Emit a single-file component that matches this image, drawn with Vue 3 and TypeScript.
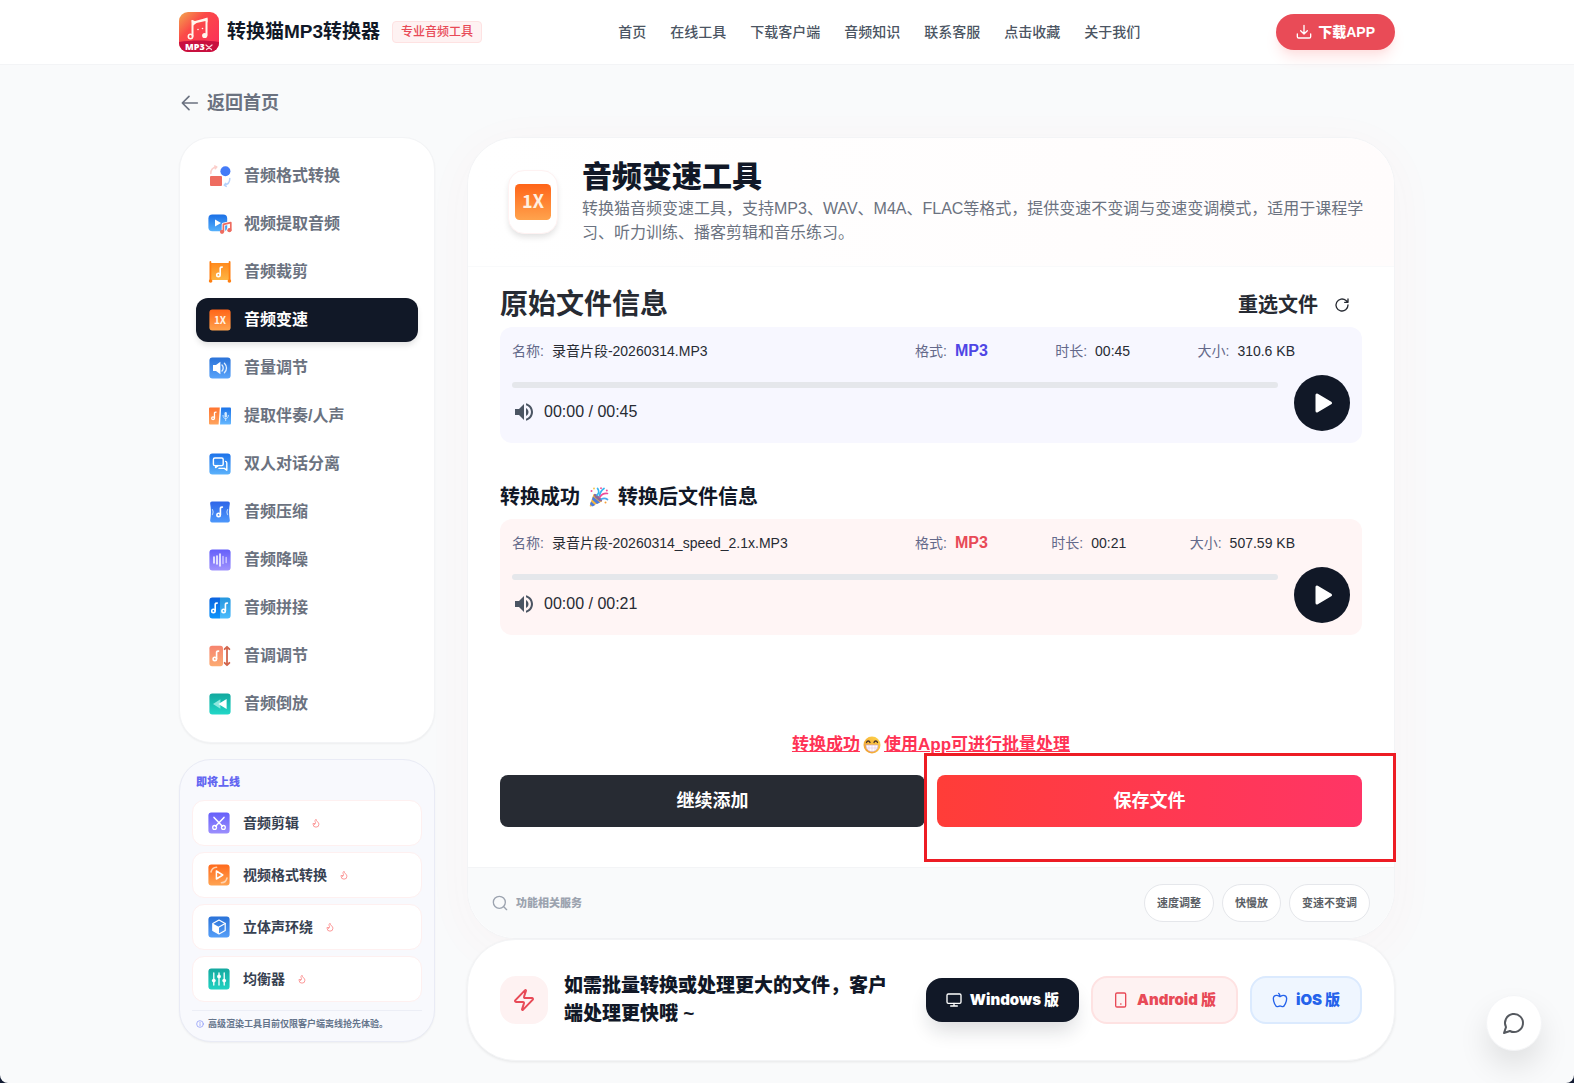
<script setup lang="ts">
import { ref } from 'vue'

interface Tool {
  label: string
  icon: string
  active?: boolean
}

interface AudioFile {
  id: string
  name: string
  format: string
  duration: string
  size: string
}

const navLinks: string[] = ['首页', '在线工具', '下载客户端', '音频知识', '联系客服', '点击收藏', '关于我们']

// Eighth note shared by several tool icons
const note = (x: number, y: number, s = 1): string =>
  `<g transform="translate(${x} ${y}) scale(${s})" fill="none" stroke="#fff" stroke-width="1.6" stroke-linecap="round" stroke-linejoin="round"><circle cx="-1.2" cy="2.9" r="1.7"/><path d="M.6 2.8V-4c.2-.7 1-.9 2-.9"/></g>`

const gradient = (id: string, from: string, to: string): string =>
  `<defs><linearGradient id="${id}" x1="0" y1="0" x2="0" y2="1"><stop stop-color="${from}"/><stop offset="1" stop-color="${to}"/></linearGradient></defs>`

const tile = (id: string, from: string, to: string): string =>
  `${gradient(id, from, to)}<rect x="1.4" y="1.4" width="21.2" height="21.2" rx="3" fill="url(#${id})"/>`

const speedIcon =
  tile('g-speed', '#ff6418', '#ffa34d') +
  '<text x="12" y="15.8" font-family="Noto Sans CJK SC, sans-serif" font-size="10" font-weight="700" text-anchor="middle" fill="#fff4e6">1X</text>'

const tools: Tool[] = [
  {
    label: '音频格式转换',
    icon:
      '<rect x="2" y="12" width="12" height="10" rx="1" fill="#ee6c60"/><circle cx="17.4" cy="7.2" r="5" fill="#447bf7"/><path d="M2.8 9.4C2.8 5.4 4.8 3.4 8.4 3M6.6 2l2.2 1-1.6 1.8" fill="none" stroke="#fbcfcb" stroke-width="1.5"/><path d="M21.8 14.6c0 4-1.8 6-5.4 6.4M18.2 22.4l-2-1.2 1.4-1.8" fill="none" stroke="#b5d2fb" stroke-width="1.5"/>'
  },
  {
    label: '视频提取音频',
    icon:
      gradient('g-video', '#1a6fe6', '#55b0fb') +
      '<rect x=".4" y="2.4" width="18.8" height="16.8" rx="4" fill="url(#g-video)"/><path d="M7 7.4v7.2l6-3.6z" fill="#fff"/><path d="M15.4 19.6v-7.2l7.4-1.8v7.4" fill="none" stroke="#fff" stroke-width="3.4"/><path d="M15.4 19.6v-7.2l7.4-1.8v7.4" fill="none" stroke="#ee6c60" stroke-width="1.7"/><circle cx="14" cy="19.8" r="2.1" fill="#ee6c60"/><circle cx="21.4" cy="18.2" r="2.1" fill="#ee6c60"/>'
  },
  {
    label: '音频裁剪',
    icon:
      gradient('g-trim', '#ff8a1c', '#fdb544') +
      '<rect x="2.4" y="3" width="19.2" height="17" fill="url(#g-trim)"/><path d="M2.4 2v19M21.6 2v19" stroke="#ff7f11" stroke-width="1.8" stroke-linecap="round"/><circle cx="2.6" cy="21" r="1.8" fill="#ff7f11"/><circle cx="21.4" cy="21" r="1.8" fill="#ff7f11"/>' +
      note(11.6, 12)
  },
  { label: '音频变速', icon: speedIcon, active: true },
  {
    label: '音量调节',
    icon:
      tile('g-volume', '#2a72d8', '#5aa4fa') +
      '<path d="M5 9h3l4.4-3.2v12.4L8 15H5z" fill="#fff"/><path d="M14 9c1.6 1.6 1.6 4.4 0 6M16.4 7.2c2.8 2.8 2.8 6.8 0 9.6" fill="none" stroke="#e2efff" stroke-width="1.3" stroke-linecap="round"/>'
  },
  {
    label: '提取伴奏/人声',
    icon:
      gradient('g-split-a', '#ff7430', '#ffa45e') +
      gradient('g-split-b', '#1a72e8', '#66b8ff') +
      '<path d="M2 3.4h9.8L10.6 20.6H2a1 1 0 0 1-1-1V4.4a1 1 0 0 1 1-1z" fill="url(#g-split-a)"/><path d="M13.2 3.4H22a1 1 0 0 1 1 1v15.2a1 1 0 0 1-1 1H12z" fill="url(#g-split-b)"/>' +
      note(6, 12, 0.8) +
      '<rect x="16.5" y="8" width="2.4" height="5.4" rx="1.2" fill="#d5eaff"/><path d="M15 11.4c0 4.4 5.4 4.4 5.4 0M17.7 14.6v2" fill="none" stroke="#d5eaff" stroke-width=".9"/>'
  },
  {
    label: '双人对话分离',
    icon:
      tile('g-dialog', '#1c72ea', '#5cb2fb') +
      '<rect x="5.4" y="6" width="9.8" height="7.6" rx="1.4" fill="none" stroke="#fff" stroke-width="1.4"/><path d="M7.6 13.6v2l2.4-2M17.6 9.4c1 .2 1.2.8 1.2 1.6v7.2l-2.4-1.8H11" fill="none" stroke="#fff" stroke-width="1.4" stroke-linejoin="round"/>'
  },
  {
    label: '音频压缩',
    icon:
      gradient('g-compress', '#2f66e8', '#4c97fb') +
      '<path d="M4 1.6h16c1.4 0 2 1.2 1.8 2.4-1 5.4-1 10.600 0 16 .2 1.2-.4 2.4-1.8 2.400H4c-1.400 0-2-1.200-1.800-2.400 1-5.400 1-10.600 0-16C2 2.800 2.600 1.600 4 1.600z" fill="url(#g-compress)"/><path d="M4.400 9.600c1 1.600 1 3.400 0 5M19.600 9.600c-1 1.600-1 3.400 0 5" fill="none" stroke="#a9cdfd" stroke-width="1.200"/>' +
      note(11.8, 12)
  },
  {
    label: '音频降噪',
    icon:
      tile('g-noise', '#6560fa', '#9f92fd') +
      '<path d="M6 9v6M9 8v8M12 6v12" stroke="#fff" stroke-width="1.5" stroke-linecap="round"/><path d="M15 8.4v7.2M18.2 9.4v5.2" stroke="#c9c4ff" stroke-width="1.5" stroke-linecap="round"/>'
  },
  {
    label: '音频拼接',
    icon:
      gradient('g-join-a', '#0c62df', '#0b95fb') +
      gradient('g-join-b', '#2596de', '#4cbcfc') +
      '<path d="M12 1.4H4.4a3 3 0 0 0-3 3v15.2a3 3 0 0 0 3 3H12z" fill="url(#g-join-a)"/><path d="M12 1.4h7.6a3 3 0 0 1 3 3v15.2a3 3 0 0 1-3 3H12z" fill="url(#g-join-b)"/>' +
      note(6.6, 12) +
      note(16.8, 12)
  },
  {
    label: '音调调节',
    icon:
      gradient('g-pitch', '#f6846f', '#fcab72') +
      '<rect x="1.4" y="1.8" width="13.6" height="20.4" rx="2.6" fill="url(#g-pitch)"/><path d="M19 4v16M16.6 5.2 19 2.8l2.4 2.4M16.6 18.8 19 21.2l2.4-2.4" fill="none" stroke="#d0654d" stroke-width="1.8"/>' +
      note(8, 12)
  },
  {
    label: '音频倒放',
    icon:
      tile('g-reverse', '#12a89e', '#22d8c8') +
      '<path d="M12.4 7.2v9.6L5 12z" fill="#8fe8df"/><path d="M18.6 7v10L10.4 12z" fill="#fff"/>'
  }
]

const upcoming: Tool[] = [
  {
    label: '音频剪辑',
    icon:
      tile('g-edit', '#655ffa', '#9c8ffd') +
      '<path d="M7 6.4l8.4 8.8M17 6.4l-8.4 8.8" stroke="#fff" stroke-width="1.5" stroke-linecap="round"/><circle cx="7.6" cy="16.4" r="1.9" fill="none" stroke="#fff" stroke-width="1.3"/><circle cx="16.4" cy="16.4" r="1.9" fill="none" stroke="#fff" stroke-width="1.3"/>'
  },
  {
    label: '视频格式转换',
    icon:
      tile('g-vconv', '#ff6a1c', '#ffa452') +
      '<path d="M9.4 8v8l6.4-4z" fill="none" stroke="#fff" stroke-width="1.5" stroke-linejoin="round"/><path d="M4 9c.6-3 2.6-4.6 5.6-4.800M20 15c-.6 3-2.600 4.600-5.600 4.800" fill="none" stroke="#ffd3b0" stroke-width="1.5"/>'
  },
  {
    label: '立体声环绕',
    icon:
      tile('g-stereo', '#2a72d8', '#569ff8') +
      '<path d="M12 5l6.2 3.5v7L12 19l-6.2-3.500v-7z" fill="none" stroke="#fff" stroke-width="1.2" stroke-linejoin="round"/><path d="M5.8 8.500L12 12v7l-6.200-3.500z" fill="#fff"/><path d="M12 12l6.200-3.500" stroke="#fff" stroke-width="1.2"/>'
  },
  {
    label: '均衡器',
    icon:
      tile('g-eq', '#14a89f', '#22d3c2') +
      '<path d="M6.8 6v12M12 6v12M17.2 6v12" stroke="#fff" stroke-width="1.3" stroke-linecap="round"/><circle cx="6.8" cy="13.6" r="1.9" fill="#fff"/><circle cx="12" cy="9.4" r="1.9" fill="#fff"/><circle cx="17.2" cy="13.6" r="1.9" fill="#fff"/>'
  }
]

const original: AudioFile = {
  id: 'original',
  name: '录音片段-20260314.MP3',
  format: 'MP3',
  duration: '00:45',
  size: '310.6 KB'
}

const converted: AudioFile = {
  id: 'converted',
  name: '录音片段-20260314_speed_2.1x.MP3',
  format: 'MP3',
  duration: '00:21',
  size: '507.59 KB'
}

const sections = [original, converted]
const position = ref<Record<string, number>>({ original: 0, converted: 0 })
const tags: string[] = ['速度调整', '快慢放', '变速不变调']
</script>

<template>
  <div class="page">
    <header class="topbar">
      <div class="container topbar-row">
        <div class="brand">
          <svg class="logo" viewBox="0 0 40 40" aria-hidden="true">
            <defs>
              <linearGradient id="logo-bg" x1="0" y1="0" x2="1" y2="1">
                <stop stop-color="#f2a84e" />
                <stop offset=".35" stop-color="#fb4a48" />
                <stop offset="1" stop-color="#fb2a5c" />
              </linearGradient>
              <clipPath id="logo-clip"><rect width="40" height="40" rx="9" /></clipPath>
            </defs>
            <g clip-path="url(#logo-clip)">
              <rect width="40" height="40" fill="url(#logo-bg)" />
              <path d="M0 30c12-2 28-2 40 0v10H0z" fill="#c8103f" />
              <path d="M13.500 24V9M27.500 7v16" fill="none" stroke="#fff6ee" stroke-width="2" />
              <path d="M12.500 8l3.500 1 7.500-2 5-1.500v5l-2-1.500-9 2-4 3z" fill="#fff6ee" />
              <circle cx="11.500" cy="24.500" r="2.200" fill="none" stroke="#fff6ee" stroke-width="1.500" />
              <circle cx="25.700" cy="23.500" r="2.600" fill="#fff6ee" />
              <circle cx="19" cy="17.500" r=".8" fill="#fff6ee" />
              <circle cx="23.500" cy="16.500" r=".8" fill="#fff6ee" />
              <text x="6" y="37.500" font-family="Open Sans, sans-serif" font-size="9" font-weight="800" fill="#fff">MP3</text>
              <path d="M27 33l5.500 4.500M33 33l-5.500 4.500" stroke="#fbd3dc" stroke-width="1.200" />
            </g>
          </svg>
          <span class="brand-name">转换猫MP3转换器</span>
          <span class="brand-badge">专业音频工具</span>
        </div>
        <nav class="nav" aria-label="主导航">
          <a v-for="link in navLinks" :key="link" href="#">{{ link }}</a>
        </nav>
        <button class="download" type="button">
          <svg class="i16" viewBox="0 0 24 24" aria-hidden="true">
            <path d="M12 2v13M7 10l5 5 5-5M2 15v4a2 2 0 0 0 2 2h16a2 2 0 0 0 2-2v-4" />
          </svg>
          下载APP
        </button>
      </div>
    </header>

    <main class="container content">
      <a class="back" href="#">
        <svg viewBox="0 0 24 24" aria-hidden="true"><path d="M22 12H4M12 4l-8 8 8 8" /></svg>
        返回首页
      </a>

      <div class="columns">
        <aside class="side">
          <nav class="tools" aria-label="工具">
            <a v-for="tool in tools" :key="tool.label" href="#" class="tool" :class="{ active: tool.active }">
              <svg class="tool-icon" viewBox="0 0 24 24" aria-hidden="true" v-html="tool.icon"></svg>
              {{ tool.label }}
            </a>
          </nav>

          <section class="upcoming">
            <h2>即将上线</h2>
            <div class="upcoming-list">
              <a v-for="tool in upcoming" :key="tool.label" href="#" class="upcoming-item">
                <svg class="tool-icon" viewBox="0 0 24 24" aria-hidden="true" v-html="tool.icon"></svg>
                <span>{{ tool.label }}</span>
                <svg class="flame" viewBox="0 0 24 24" aria-hidden="true">
                  <path d="M8.500 14.500A2.500 2.500 0 0 0 11 12c0-1.400-.5-2-1-3-1.100-2.100-.2-4 2-6 .5 2.500 2 4.900 4 6.500s3 3.500 3 5.500a7 7 0 1 1-14 0c0-1.200.4-2.300 1-3a2.500 2.500 0 0 0 2.500 2.500z" />
                </svg>
              </a>
            </div>
            <p class="upcoming-note">
              <svg viewBox="0 0 24 24" aria-hidden="true"><circle cx="12" cy="12" r="10" /><path d="M12 11v6M12 7v1" /></svg>
              高级渲染工具目前仅限客户端离线抢先体验。
            </p>
          </section>
        </aside>

        <div class="main">
          <article class="panel">
            <header class="panel-head">
              <div class="panel-icon">
                <svg viewBox="0 0 24 24" aria-hidden="true">
                  <defs>
                    <linearGradient id="head-bg" x1="0" y1="0" x2="0" y2="1">
                      <stop stop-color="#ff6418" />
                      <stop offset="1" stop-color="#ffa34d" />
                    </linearGradient>
                  </defs>
                  <rect width="24" height="24" rx="3" fill="url(#head-bg)" />
                  <text x="12" y="16.200" font-family="Noto Sans CJK SC, sans-serif" font-size="12" font-weight="700" text-anchor="middle" fill="#fff0e0">1X</text>
                </svg>
              </div>
              <div>
                <h1>音频变速工具</h1>
                <p>转换猫音频变速工具，支持MP3、WAV、M4A、FLAC等格式，提供变速不变调与变速变调模式，适用于课程学习、听力训练、播客剪辑和音乐练习。</p>
              </div>
            </header>

            <div class="panel-body">
              <section v-for="file in sections" :key="file.id" class="file" :class="file.id">
                <div v-if="file.id === 'original'" class="file-head">
                  <h2>原始文件信息</h2>
                  <button class="reselect" type="button">
                    重选文件
                    <svg class="i16" viewBox="0 0 24 24" aria-hidden="true">
                      <path d="M21 12a9 9 0 1 1-3-6.700L21 8M21 3v5h-5" />
                    </svg>
                  </button>
                </div>
                <h3 v-else class="done-title">
                  转换成功
                  <svg viewBox="0 0 20 20" aria-hidden="true">
                    <path d="M4.500 7l8.500 7.500-11 5c-.8.300-1.400-.3-1.200-1z" fill="#f5b93c" />
                    <path d="M4 9.500l7 6-3 1.500-5-4.600zM2 14.500l4.200 3.600-2.600 1.300L1 17.200z" fill="#4b7be0" />
                    <ellipse cx="9" cy="10.700" rx="5.300" ry="1.700" transform="rotate(42 9 10.700)" fill="#8d6a9a" />
                    <path d="M8 8c2-1.500 2-4.500.6-6.500M10.500 9c.5-3 2-6 4.500-7.500" fill="none" stroke="#38b6ef" stroke-width="1.800" stroke-linecap="round" />
                    <path d="M11 10c1.500-2.500 4-4 7.500-3.500" fill="none" stroke="#f04c98" stroke-width="1.700" stroke-linecap="round" />
                    <path d="M12.500 12c2-1 4-1 6 .5" fill="none" stroke="#4aa8ee" stroke-width="1.700" stroke-linecap="round" />
                    <circle cx="2.500" cy="4" r="1" fill="#f04c98" /><circle cx="5" cy="1.500" r=".9" fill="#f6c544" />
                    <circle cx="17.800" cy="3.600" r="1" fill="#f04c98" /><circle cx="16.500" cy="15.500" r="1" fill="#f6a13c" />
                    <circle cx="12" cy="1.200" r=".9" fill="#f04c98" />
                  </svg>
                  转换后文件信息
                </h3>

                <div class="player">
                  <dl class="info">
                    <div class="pair"><dt>名称:</dt><dd>{{ file.name }}</dd></div>
                    <div class="meta">
                      <div class="pair"><dt>格式:</dt><dd class="format">{{ file.format }}</dd></div>
                      <div class="pair"><dt>时长:</dt><dd>{{ file.duration }}</dd></div>
                      <div class="pair"><dt>大小:</dt><dd>{{ file.size }}</dd></div>
                    </div>
                  </dl>
                  <div class="controls">
                    <div class="track">
                      <input v-model.number="position[file.id]" type="range" min="0" max="100" aria-label="播放进度" />
                      <div class="time">
                        <button class="mute" type="button" aria-label="音量">
                          <svg viewBox="0 0 24 24" aria-hidden="true">
                            <path d="M3 9v6h4l5 5V4L7 9H3zm13.500 3c0-1.770-1.020-3.290-2.500-4.030v8.050c1.480-.73 2.500-2.250 2.500-4.020zM14 3.230v2.060c2.890.86 5 3.540 5 6.710s-2.110 5.850-5 6.710v2.060c4.010-.91 7-4.490 7-8.770s-2.990-7.860-7-8.770z" />
                          </svg>
                        </button>
                        <span>00:00 / {{ file.duration }}</span>
                      </div>
                    </div>
                    <button class="play" type="button" aria-label="播放">
                      <svg viewBox="0 0 24 24" aria-hidden="true">
                        <path d="M6 4v16l13.500-8z" fill="#fff" stroke="#fff" stroke-width="3" stroke-linejoin="round" />
                      </svg>
                    </button>
                  </div>
                </div>
              </section>

              <a class="batch" href="#">
                <span>转换成功</span>
                <svg viewBox="0 0 18 18" aria-hidden="true">
                  <defs>
                    <linearGradient id="grin" x1="1" y1="0" x2="0" y2="1">
                      <stop stop-color="#ffd84e" />
                      <stop offset="1" stop-color="#f09a2c" />
                    </linearGradient>
                  </defs>
                  <circle cx="9" cy="9" r="8.500" fill="url(#grin)" />
                  <path d="M3.500 6.500c.6-2 2.900-2 3.500 0M11 6.500c.6-2 2.900-2 3.500 0" fill="none" stroke="#4a3328" stroke-width="1.300" stroke-linecap="round" />
                  <path d="M3 9h12c0 4.200-2.400 6.500-6 6.500S3 13.200 3 9z" fill="#fff" stroke="#c9a0c0" stroke-width=".6" />
                  <path d="M3.300 12h11.400M6 9v5.500M9 9v6.300M12 9v5.500" stroke="#e4c6e4" stroke-width=".6" />
                </svg>
                <span>使用App可进行批量处理</span>
              </a>

              <div class="actions">
                <button class="action dark" type="button">继续添加</button>
                <div class="save">
                  <button class="action red" type="button">保存文件</button>
                  <div class="highlight" aria-hidden="true"></div>
                </div>
              </div>
            </div>

            <footer class="panel-foot">
              <div class="related">
                <svg class="i16" viewBox="0 0 24 24" aria-hidden="true"><circle cx="11" cy="11" r="9" /><path d="M18 18l4 4" /></svg>
                功能相关服务
              </div>
              <div class="tags">
                <a v-for="tag in tags" :key="tag" href="#">{{ tag }}</a>
              </div>
            </footer>
          </article>

          <section class="client">
            <div class="client-icon">
              <svg viewBox="0 0 24 24" aria-hidden="true">
                <path d="M4 14a1 1 0 0 1-.78-1.630l9.900-10.200a.5.5 0 0 1 .86.460l-1.920 6.020A1 1 0 0 0 13 10h7a1 1 0 0 1 .78 1.630l-9.900 10.200a.5.5 0 0 1-.86-.460l1.920-6.020A1 1 0 0 0 11 14z" />
              </svg>
            </div>
            <p>如需批量转换或处理更大的文件，客户端处理更快哦 ~</p>
            <div class="client-buttons">
              <button class="client-btn windows" type="button">
                <svg class="i16" viewBox="0 0 24 24" aria-hidden="true"><rect x="1.500" y="3" width="21" height="14" rx="2" /><path d="M12 17v4M7 21h10" /></svg>
                Windows 版
              </button>
              <button class="client-btn android" type="button">
                <svg class="i16" viewBox="0 0 24 24" aria-hidden="true"><rect x="4" y="1.500" width="15" height="21" rx="2" /><path d="M11.500 18h.5" /></svg>
                Android 版
              </button>
              <button class="client-btn ios" type="button">
                <svg class="i16" viewBox="0 0 24 24" aria-hidden="true"><path d="M12 20.900c1.500 0 2.750 1.060 4 1.060 3 0 6-8 6-12.220A4.910 4.910 0 0 0 17 5c-2.220 0-4 1.440-5 2-1-.56-2.780-2-5-2a4.900 4.900 0 0 0-5 4.780C2 14 5 22 8 22c1.250 0 2.500-1.060 4-1.060zM10 2c1 .5 2 2 2 5" /></svg>
                iOS 版
              </button>
            </div>
          </section>
        </div>
      </div>
    </main>

    <button class="chat" type="button" aria-label="在线客服">
      <svg viewBox="0 0 24 24" aria-hidden="true"><path d="M7.900 20A9 9 0 1 0 4 16.100L2 22z" /></svg>
    </button>
  </div>
</template>

<style>
body {
  margin: 0;
  background: #131c33;
}
</style>

<style scoped>
.page {
  min-height: 100vh;
  border-radius: 0 0 8px 8px;
  background: #f9fafb;
  color: #111827;
  font-family: "Liberation Sans", "Noto Sans CJK SC", sans-serif;
  font-size: 16px;
  line-height: 24px;
}

*,
*::before {
  box-sizing: border-box;
}

h1,
h2,
h3,
p,
dl,
dd {
  margin: 0;
}

a {
  color: inherit;
  text-decoration: none;
}

button {
  border: 0;
  padding: 0;
  background: none;
  color: inherit;
  font: inherit;
  cursor: pointer;
}

svg {
  flex: none;
  fill: none;
  stroke: currentColor;
  stroke-width: 2;
  stroke-linecap: round;
  stroke-linejoin: round;
}

.i16 {
  width: 16px;
  height: 16px;
}

.container {
  max-width: 1280px;
  margin: 0 auto;
  padding: 0 32px;
}

.topbar {
  background: #fff;
  border-bottom: 1px solid #f3f4f6;
}

.topbar-row {
  display: flex;
  align-items: center;
  justify-content: space-between;
  height: 64px;
}

.brand {
  display: flex;
  align-items: center;
  gap: 8px;
}

.logo {
  width: 40px;
  height: 40px;
  stroke: none;
}

.brand-name {
  font-size: 19px;
  font-weight: 700;
  line-height: 28px;
}

.brand-badge {
  margin-left: 4px;
  border: 1px solid #fee2e2;
  border-radius: 4px;
  padding: 2px 8px;
  background: #fef2f2;
  color: #e84a57;
  font-size: 12px;
  font-weight: 500;
  line-height: 16px;
}

.nav {
  display: flex;
  gap: 24px;
  color: #4b5563;
  font-size: 14px;
  font-weight: 500;
  line-height: 20px;
}

.download {
  display: flex;
  align-items: center;
  gap: 6px;
  height: 36px;
  border-radius: 18px;
  padding: 0 20px;
  background: #e94b57;
  box-shadow: 0 10px 15px -3px #fee2e2, 0 4px 6px -4px #fecaca;
  color: #fff;
  font-size: 14px;
  font-weight: 900;
}

.content {
  padding-top: 24px;
  padding-bottom: 16px;
}

.back {
  display: inline-flex;
  align-items: center;
  gap: 8px;
  margin-bottom: 20px;
  color: #6b7280;
  font-size: 18px;
  font-weight: 600;
  line-height: 28px;
  vertical-align: top;
}

.back svg {
  width: 20px;
  height: 20px;
}

.columns {
  display: flex;
  align-items: flex-start;
  gap: 32px;
}

.side {
  flex: none;
  width: 256px;
}

.tools {
  display: flex;
  flex-direction: column;
  gap: 4px;
  border: 1px solid #f3f4f6;
  border-radius: 32px;
  padding: 16px;
  background: #fff;
  box-shadow: 0 1px 2px rgba(0, 0, 0, 0.05);
}

.tool {
  display: flex;
  align-items: center;
  gap: 12px;
  height: 44px;
  border-radius: 12px;
  padding: 0 12px;
  color: #6b7280;
  font-weight: 600;
}

.tool.active {
  background: #111827;
  box-shadow: 0 4px 6px -1px rgba(0, 0, 0, 0.12);
  color: #fff;
}

.tool-icon {
  width: 24px;
  height: 24px;
  stroke: none;
}

.upcoming {
  margin-top: 16px;
  border: 1px solid #e9ebf5;
  border-radius: 32px;
  padding: 12px 12px 8px;
  background: #f8f9fd;
  box-shadow: 0 1px 2px rgba(0, 0, 0, 0.05);
}

.upcoming h2 {
  padding: 2px 4px 10px;
  color: #6366f1;
  font-size: 11px;
  font-weight: 900;
  line-height: 16px;
}

.upcoming-list {
  display: flex;
  flex-direction: column;
  gap: 6px;
}

.upcoming-item {
  display: flex;
  align-items: center;
  gap: 12px;
  height: 46px;
  border: 1px solid #fef0f0;
  border-radius: 12px;
  padding: 0 14px;
  background: #fff;
  color: #374151;
  font-size: 14px;
  font-weight: 600;
}

.flame {
  width: 10px;
  height: 10px;
  color: #fb8585;
}

.upcoming-note {
  display: flex;
  align-items: center;
  gap: 4px;
  margin-top: 8px;
  border-top: 1px solid #eceef6;
  padding: 5px 4px 1px;
  color: #64748b;
  font-size: 9px;
  font-weight: 700;
  line-height: 16px;
}

.upcoming-note svg {
  width: 8px;
  height: 8px;
  color: #818cf8;
}

.main {
  flex: 1;
  min-width: 0;
}

.panel {
  border: 1px solid #f3f4f6;
  border-radius: 48px;
  background: #fff;
  box-shadow: 0 10px 50px rgba(239, 68, 68, 0.04);
}

.panel-head {
  display: flex;
  align-items: center;
  gap: 24px;
  height: 129px;
  border-bottom: 1px solid #f9fafb;
  border-radius: 48px 48px 0 0;
  padding: 0 24px 0 40px;
  background: linear-gradient(90deg, #fff, #fffcfc);
}

.panel-icon {
  display: flex;
  flex: none;
  align-items: center;
  justify-content: center;
  width: 50px;
  height: 64px;
  border: 1px solid #fef2f2;
  border-radius: 16px;
  background: #fff;
  box-shadow: 0 4px 6px -1px rgba(0, 0, 0, 0.12);
}

.panel-icon svg {
  width: 36px;
  height: 36px;
  stroke: none;
}

.panel-head h1 {
  font-size: 30px;
  font-weight: 900;
  line-height: 36px;
}

.panel-head p {
  margin-top: 2px;
  color: #6b7280;
}

.panel-body {
  display: flex;
  flex-direction: column;
  padding: 20px 32px 40px;
}

.file-head {
  display: flex;
  align-items: center;
  justify-content: space-between;
  height: 36px;
  margin-bottom: 4px;
  color: #272b33;
}

.file-head h2 {
  font-size: 28px;
  font-weight: 600;
}

.reselect {
  display: flex;
  align-items: center;
  gap: 16px;
  padding-right: 12px;
  font-size: 20px;
  font-weight: 600;
}

.done-title {
  display: flex;
  align-items: center;
  gap: 9px;
  margin: 40px 0 8px;
  font-size: 20px;
  font-weight: 600;
  line-height: 28px;
}

.done-title svg {
  width: 20px;
  height: 20px;
  stroke: none;
}

.player {
  border-radius: 12px;
  padding: 12px;
  background: #f7f7ff;
}

.converted .player {
  background: #fff5f5;
}

.info {
  display: grid;
  grid-template-columns: 1fr 380px;
  padding-right: 55px;
  font-size: 14px;
}

.meta {
  display: flex;
  justify-content: space-between;
}

.pair {
  display: flex;
  gap: 8px;
}

.pair dt {
  color: #64698a;
}

.pair dd {
  color: #272b33;
}

.pair .format {
  color: #4f46e5;
  font-size: 16px;
  font-weight: 700;
}

.converted .format {
  color: #e84a57;
}

.controls {
  display: flex;
  align-items: center;
  gap: 16px;
  margin-top: 12px;
}

.track {
  flex: 1;
}

.track input {
  display: block;
  width: 100%;
  height: 6px;
  margin: 0 0 12px;
  border-radius: 3px;
  background: #e5e7eb;
  appearance: none;
}

.track input::-webkit-slider-thumb {
  width: 0;
  height: 0;
  appearance: none;
}

.time {
  display: flex;
  align-items: center;
  gap: 8px;
  color: #272b33;
}

.mute {
  display: flex;
  color: #4b5563;
}

.mute svg {
  width: 24px;
  height: 24px;
  fill: currentColor;
  stroke: none;
}

.play {
  display: flex;
  align-items: center;
  justify-content: center;
  width: 56px;
  height: 56px;
  border-radius: 50%;
  background: #111827;
}

.play svg {
  width: 24px;
  height: 24px;
  margin-left: 2px;
}

.batch {
  display: flex;
  align-items: center;
  align-self: center;
  margin: 98px 0 18px;
  color: #ff3355;
  font-size: 17px;
  font-weight: 600;
  text-decoration: underline;
}

.batch svg {
  width: 18px;
  height: 18px;
  margin: 0 3px;
  stroke: none;
}

.actions {
  display: flex;
  gap: 12px;
}

.actions > * {
  flex: 1;
}

.action {
  height: 52px;
  border-radius: 8px;
  color: #fff;
  font-size: 18px;
  font-weight: 700;
}

.dark {
  background: #272b33;
}

.red {
  width: 100%;
  background: linear-gradient(90deg, #ff3d38, #ff3566);
}

.save {
  position: relative;
}

.highlight {
  position: absolute;
  inset: -22px -34px -35px -13px;
  border: 3px solid #ed1c24;
  pointer-events: none;
}

.panel-foot {
  display: flex;
  align-items: center;
  justify-content: space-between;
  border-top: 1px solid #f3f4f6;
  border-radius: 0 0 48px 48px;
  padding: 16px 24px;
  background: #f9fafb;
}

.related {
  display: flex;
  align-items: center;
  gap: 8px;
  color: #9ca3af;
  font-size: 11px;
  font-weight: 900;
}

.tags {
  display: flex;
  gap: 8px;
}

.tags a {
  border: 1px solid #e5e7eb;
  border-radius: 19px;
  padding: 6px 12px;
  background: #fff;
  color: #5b5f66;
  font-size: 11px;
  font-weight: 700;
}

.client {
  display: flex;
  align-items: center;
  gap: 16px;
  border: 1px solid #f3f4f6;
  border-radius: 48px;
  padding: 32px;
  background: #fff;
  box-shadow: 0 1px 3px rgba(0, 0, 0, 0.08);
}

.client-icon {
  display: flex;
  flex: none;
  align-items: center;
  justify-content: center;
  width: 48px;
  height: 48px;
  border-radius: 16px;
  background: #fef2f2;
  color: #e84a57;
}

.client-icon svg {
  width: 24px;
  height: 24px;
}

.client p {
  flex: 1;
  padding-right: 8px;
  font-size: 19px;
  font-weight: 900;
  line-height: 28px;
}

.client-buttons {
  display: flex;
  align-items: center;
  gap: 12px;
}

.client-btn {
  display: flex;
  align-items: center;
  gap: 8px;
  height: 48px;
  border: 2px solid;
  border-radius: 16px;
  padding: 0 20px;
  font-family: Inter, "Noto Sans CJK SC", sans-serif;
  font-size: 15px;
  font-weight: 900;
  white-space: nowrap;
}

.windows {
  height: 44px;
  border: 0;
  background: #111827;
  box-shadow: 0 12px 20px -4px rgba(17, 24, 39, 0.16);
  color: #fff;
}

.android {
  border-color: #fee2e2;
  background: #fef2f2;
  color: #e84a57;
}

.ios {
  border-color: #dbeafe;
  background: #eff6ff;
  color: #2563eb;
}

.chat {
  position: fixed;
  right: 32px;
  bottom: 32px;
  display: flex;
  align-items: center;
  justify-content: center;
  width: 56px;
  height: 56px;
  border: 1px solid #f3f4f6;
  border-radius: 50%;
  background: #fff;
  box-shadow: 0 16px 30px rgba(0, 0, 0, 0.1);
  color: #55595f;
}

.chat svg {
  width: 24px;
  height: 24px;
}
</style>
